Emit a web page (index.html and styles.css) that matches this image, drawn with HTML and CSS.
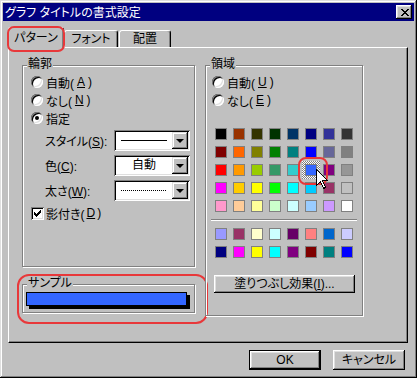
FILE: index.html
```html
<!DOCTYPE html>
<html lang="ja">
<head>
    <meta charset="UTF-8">
    <meta name="viewport" content="width=device-width, initial-scale=1.0">
    <title>グラフ タイトルの書式設定</title>
    <link rel="stylesheet" href="styles.css">
</head>
<body>

<div class="window">
    <div class="titlebar">
        <span class="title">グラフ タイトルの書式設定</span>
        <button class="close-btn">
            <svg width="8" height="7" viewBox="0 0 8 7" shape-rendering="crispEdges">
                <path d="M0 0h2v1H0zM6 0h2v1H6zM1 1h2v1H1zM5 1h2v1H5zM2 2h4v1H2zM3 3h2v1H3zM2 4h4v1H2zM1 5h2v1H1zM5 5h2v1H5zM0 6h2v1H0zM6 6h2v1H6z" fill="#000"/>
            </svg>
        </button>
    </div>

    <div class="tabs">
        <div class="tab active">パターン</div>
        <div class="tab">フォント</div>
        <div class="tab">配置</div>
    </div>

    <div class="panel">
        <div class="left-col">
            <div class="group line-group">
                <span class="legend">輪郭</span>
                <div class="radio-row"><span class="radio"></span>自動(<u>A</u>)</div>
                <div class="radio-row"><span class="radio"></span>なし(<u>N</u>)</div>
                <div class="radio-row"><span class="radio on"></span>指定</div>

                <div class="combo-row first">
                    <span class="combo-label">スタイル(<u>S</u>):</span>
                    <div class="combo">
                        <div class="combo-field"><span class="line-solid"></span></div>
                        <span class="combo-btn"></span>
                    </div>
                </div>
                <div class="combo-row">
                    <span class="combo-label">色(<u>C</u>):</span>
                    <div class="combo">
                        <div class="combo-field">自動</div>
                        <span class="combo-btn"></span>
                    </div>
                </div>
                <div class="combo-row">
                    <span class="combo-label">太さ(<u>W</u>):</span>
                    <div class="combo">
                        <div class="combo-field"><span class="line-dotted"></span></div>
                        <span class="combo-btn"></span>
                    </div>
                </div>

                <div class="check-row">
                    <span class="checkbox">
                        <svg width="7" height="7" viewBox="0 0 7 7" shape-rendering="crispEdges">
                            <path d="M6 0h1v3H6zM5 1h1v3H5zM4 2h1v3H4zM3 3h1v3H3zM2 4h1v3H2zM1 3h1v3H1zM0 2h1v3H0z" fill="#000"/>
                        </svg>
                    </span>
                    影付き(<u>D</u>)
                </div>
            </div>

            <div class="group sample-group">
                <span class="legend">サンプル</span>
                <div class="sample-bar"></div>
            </div>
        </div>

        <div class="group area-group">
            <span class="legend">領域</span>
            <div class="radio-row"><span class="radio"></span>自動(<u>U</u>)</div>
            <div class="radio-row"><span class="radio"></span>なし(<u>E</u>)</div>

            <div class="swatches main">
                <span class="swatch" style="background:#000000"></span>
                <span class="swatch" style="background:#993300"></span>
                <span class="swatch" style="background:#333300"></span>
                <span class="swatch" style="background:#003300"></span>
                <span class="swatch" style="background:#003366"></span>
                <span class="swatch" style="background:#000080"></span>
                <span class="swatch" style="background:#333399"></span>
                <span class="swatch" style="background:#333333"></span>

                <span class="swatch" style="background:#800000"></span>
                <span class="swatch" style="background:#ff6600"></span>
                <span class="swatch" style="background:#808000"></span>
                <span class="swatch" style="background:#008000"></span>
                <span class="swatch" style="background:#008080"></span>
                <span class="swatch" style="background:#0000ff"></span>
                <span class="swatch" style="background:#666699"></span>
                <span class="swatch" style="background:#808080"></span>

                <span class="swatch" style="background:#ff0000"></span>
                <span class="swatch" style="background:#ff9900"></span>
                <span class="swatch" style="background:#99cc00"></span>
                <span class="swatch" style="background:#339966"></span>
                <span class="swatch" style="background:#33cccc"></span>
                <span class="swatch-sel"><span class="swatch" style="background:#3366ff"></span></span>
                <span class="swatch" style="background:#800080"></span>
                <span class="swatch" style="background:#969696"></span>

                <span class="swatch" style="background:#ff00ff"></span>
                <span class="swatch" style="background:#ffcc00"></span>
                <span class="swatch" style="background:#ffff00"></span>
                <span class="swatch" style="background:#00ff00"></span>
                <span class="swatch" style="background:#00ffff"></span>
                <span class="swatch" style="background:#00ccff"></span>
                <span class="swatch" style="background:#993366"></span>
                <span class="swatch" style="background:#c0c0c0"></span>

                <span class="swatch" style="background:#ff99cc"></span>
                <span class="swatch" style="background:#ffcc99"></span>
                <span class="swatch" style="background:#ffff99"></span>
                <span class="swatch" style="background:#ccffcc"></span>
                <span class="swatch" style="background:#ccffff"></span>
                <span class="swatch" style="background:#99ccff"></span>
                <span class="swatch" style="background:#cc99ff"></span>
                <span class="swatch" style="background:#ffffff"></span>
            </div>

            <div class="separator"></div>

            <div class="swatches chart">
                <span class="swatch" style="background:#9999ff"></span>
                <span class="swatch" style="background:#993366"></span>
                <span class="swatch" style="background:#ffffcc"></span>
                <span class="swatch" style="background:#ccffff"></span>
                <span class="swatch" style="background:#660066"></span>
                <span class="swatch" style="background:#ff8080"></span>
                <span class="swatch" style="background:#0066cc"></span>
                <span class="swatch" style="background:#ccccff"></span>

                <span class="swatch" style="background:#000080"></span>
                <span class="swatch" style="background:#ff00ff"></span>
                <span class="swatch" style="background:#ffff00"></span>
                <span class="swatch" style="background:#00ffff"></span>
                <span class="swatch" style="background:#800080"></span>
                <span class="swatch" style="background:#800000"></span>
                <span class="swatch" style="background:#008080"></span>
                <span class="swatch" style="background:#0000ff"></span>
            </div>

            <button class="btn fill-btn">塗りつぶし効果(<u>I</u>)...</button>
        </div>
    </div>

    <div class="buttons">
        <button class="btn default">OK</button>
        <button class="btn">キャンセル</button>
    </div>

    <!-- mouse pointer over the selected colour -->
    <svg class="cursor" width="12" height="20" viewBox="0 0 12 20">
        <path d="M0.5 0.5V16.5L4.5 12.5L7.5 19.5L9.5 18.5L6.5 11.5H11.5Z" fill="#fff" stroke="#000" stroke-width="1" shape-rendering="crispEdges"/>
    </svg>
</div>

</body>
</html>
```

FILE: styles.css
```css
* {
    box-sizing: border-box;
}
body {
    margin: 0;
    background-color: #c0c0c0;
    font-family: "Liberation Sans", "Noto Sans CJK JP", sans-serif;
    font-size: 12px;
    font-feature-settings: "palt";
    color: #000;
}
u {
    text-decoration-thickness: 1px;
    text-underline-offset: 1px;
}
button {
    font: inherit;
    color: inherit;
    margin: 0;
    padding: 0;
    border: none;
}

.window {
    position: relative;
    width: 417px;
    height: 378px;
    padding: 3px;
    background-color: #c0c0c0;
    box-shadow: inset -1px -1px #000, inset 1px 1px #dfdfdf,
                inset -2px -2px #808080, inset 2px 2px #fff;
}

/* title bar */
.titlebar {
    height: 18px;
    background-color: #000080;
    color: #fff;
    display: flex;
    align-items: center;
    justify-content: space-between;
    padding: 0 2px;
}
.title {
    line-height: 18px;
    padding-top: 1px;
}
.close-btn {
    width: 16px;
    height: 14px;
    background-color: #c0c0c0;
    display: flex;
    align-items: center;
    justify-content: center;
    padding-left: 1px;
    box-shadow: inset -1px -1px #000, inset 1px 1px #fff,
                inset -2px -2px #808080, inset 2px 2px #dfdfdf;
}
.close-btn svg {
    display: block;
}

/* tabs */
.tabs {
    display: flex;
    align-items: flex-end;
    height: 20px;
    margin: 6px 0 0 5px;
}
.tab {
    position: relative;
    height: 17px;
    line-height: 16px;
    text-align: center;
    background-color: #c0c0c0;
    border-top: 1px solid #fff;
    border-left: 1px solid #fff;
    border-right: 1px solid #000;
    border-radius: 3px 3px 0 0;
    box-shadow: inset -1px 0 #808080;
    width: 54px;
    margin-right: 1px;
}
.tab:nth-child(3) {
    width: 52px;
}
.tab.active {
    width: 56px;
    height: 21px;
    line-height: 20px;
    margin-right: 0;
    margin-bottom: -1px;
    z-index: 1;
}
.tab.active::after {
    content: "";
    position: absolute;
    left: -2px;
    top: -2px;
    width: 54px;
    height: 22px;
    border: 2px solid #e8383a;
    border-radius: 7px;
}

/* tab page */
.panel {
    display: flex;
    align-items: flex-start;
    gap: 10px;
    width: 400px;
    height: 296px;
    margin-left: 5px;
    padding: 17px 0 0 13px;
    border-top: 1px solid #fff;
    border-left: 1px solid #fff;
    border-right: 1px solid #000;
    border-bottom: 1px solid #000;
    box-shadow: inset -1px -1px #808080;
}
.left-col {
    width: 173px;
    display: flex;
    flex-direction: column;
}

/* group boxes */
.group {
    position: relative;
    border: 1px solid #808080;
    box-shadow: inset 1px 1px #fff, 1px 1px #fff;
}
.legend {
    position: absolute;
    top: -10px;
    left: 4px;
    padding: 0 1px;
    line-height: 16px;
    background-color: #c0c0c0;
}
.line-group {
    height: 202px;
    padding: 7px 0 0 8px;
}
.area-group {
    width: 158px;
    height: 251px;
    padding: 7px 0 0 6px;
}

.radio-row {
    display: flex;
    align-items: center;
    gap: 3px;
    height: 18px;
}
.radio {
    position: relative;
    flex: none;
    width: 12px;
    height: 12px;
    border-radius: 50%;
    background-color: #fff;
    box-shadow: inset 1px 1px #808080, inset -1px -1px #fff,
                inset 2px 2px #000, inset -2px -2px #dfdfdf;
}
.radio.on::after {
    content: "";
    position: absolute;
    left: 4px;
    top: 4px;
    width: 4px;
    height: 4px;
    border-radius: 50%;
    background-color: #000;
}

/* drop-down rows */
.combo-row {
    display: flex;
    align-items: center;
    height: 21px;
    margin-top: 4px;
    padding-left: 14px;
}
.combo-row.first {
    margin-top: 3px;
}
.combo-label {
    width: 69px;
}
.combo {
    display: flex;
    width: 76px;
    height: 21px;
    padding: 2px;
    background-color: #fff;
    box-shadow: inset 1px 1px #808080, inset -1px -1px #fff,
                inset 2px 2px #000, inset -2px -2px #dfdfdf;
}
.combo-field {
    flex: 1;
    display: flex;
    align-items: center;
    justify-content: center;
    line-height: 17px;
}
.combo-btn {
    width: 16px;
    height: 17px;
    display: flex;
    align-items: center;
    justify-content: center;
    background-color: #c0c0c0;
    box-shadow: inset -1px -1px #000, inset 1px 1px #dfdfdf,
                inset -2px -2px #808080, inset 2px 2px #fff;
}
.combo-btn::after {
    content: "";
    width: 0;
    height: 0;
    border-left: 4px solid transparent;
    border-right: 4px solid transparent;
    border-top: 4px solid #000;
}
.line-solid {
    width: 46px;
    height: 1px;
    background-color: #000;
}
.line-dotted {
    width: 46px;
    height: 1px;
    background: repeating-linear-gradient(90deg, #000 0 1px, transparent 1px 2px);
}

.check-row {
    display: flex;
    align-items: center;
    gap: 2px;
    height: 18px;
    margin-top: 3px;
}
.checkbox {
    width: 13px;
    height: 13px;
    display: flex;
    align-items: center;
    justify-content: center;
    background-color: #fff;
    box-shadow: inset 1px 1px #808080, inset -1px -1px #fff,
                inset 2px 2px #000, inset -2px -2px #dfdfdf;
}

/* sample */
.sample-group {
    height: 29px;
    margin-top: 17px;
    padding: 7px 0 0 3px;
}
.sample-bar {
    width: 161px;
    height: 14px;
    background-color: #3366ff;
    border: 1px solid #000;
    box-shadow: 3px 3px 0 #000;
}
.sample-group::after {
    content: "";
    position: absolute;
    left: -6px;
    top: -11px;
    width: 187px;
    height: 46px;
    border: 2px solid #e8383a;
    border-radius: 12px;
}

/* colour palette */
.swatches {
    display: grid;
    grid-template-columns: repeat(8, 12px);
    gap: 6px;
    margin-left: 3px;
}
.swatches.main {
    margin-top: 19px;
}
.swatches.chart {
    margin-top: 7px;
}
.swatch {
    display: block;
    width: 12px;
    height: 12px;
    border: 1px solid #808080;
}
.swatch-sel {
    position: relative;
    width: 18px;
    height: 18px;
    margin: -3px;
    padding: 3px;
    background: repeating-conic-gradient(#808080 0 25%, #fff 0 50%) 0 0 / 2px 2px;
}
.swatch-sel::after {
    content: "";
    position: absolute;
    left: -4px;
    top: -4px;
    width: 26px;
    height: 24px;
    border: 2px solid #e8383a;
    border-radius: 8px;
}
.separator {
    width: 146px;
    height: 2px;
    margin: 7px 0 0 -1px;
    border-top: 1px solid #808080;
    border-bottom: 1px solid #fff;
}

/* buttons */
.btn {
    height: 20px;
    width: 72px;
    background-color: #c0c0c0;
    text-align: center;
    line-height: 18px;
    box-shadow: inset -1px -1px #000, inset 1px 1px #fff,
                inset -2px -2px #808080, inset 2px 2px #dfdfdf;
}
.btn.default {
    border: 1px solid #000;
}
.fill-btn {
    display: block;
    width: 141px;
    height: 18px;
    line-height: 16px;
    margin: 17px 0 0 2px;
}
.buttons {
    display: flex;
    justify-content: flex-end;
    gap: 12px;
    margin-top: 7px;
    padding-right: 9px;
}

.cursor {
    position: absolute;
    left: 316px;
    top: 169px;
}
```
